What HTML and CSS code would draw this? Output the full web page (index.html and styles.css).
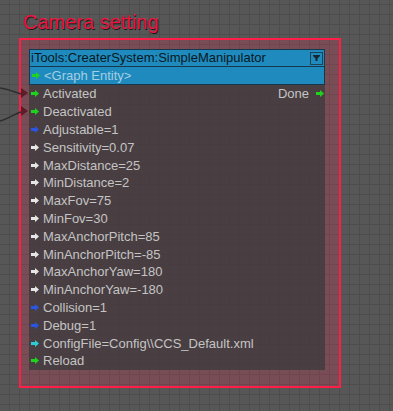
FILE: index.html
```html
<!DOCTYPE html>
<html>
<head>
<meta charset="utf-8">
<link rel="stylesheet" href="styles.css">
</head>
<body>
<div class="canvas">
  <svg class="wires" width="30" height="140" viewBox="0 0 30 140">
    <path d="M0 88 C8 89 14 92 21 94" />
    <path d="M0 121 C8 119 14 114 21 112" />
  </svg>
  <h1 class="title">Camera setting</h1>
  <div class="frame">
    <div class="node">
      <div class="head">
        <span class="head-name">iTools:CreaterSystem:SimpleManipulator</span>
        <span class="drop"><svg width="7" height="6" viewBox="0 0 7 6"><path d="M0 0h7v1L4.5 3.5V6h-2V3.5L0 1z"/></svg></span>
      </div>
      <div class="entity"><svg class="arr green" viewBox="0 0 8 7"><path d="M0 2h4V0l4 3.5L4 7V5H0z"/></svg><span>&lt;Graph Entity&gt;</span></div>
      <div class="rows">
        <div class="row"><i class="pin"></i><svg class="arr green" viewBox="0 0 8 7"><path d="M0 2h4V0l4 3.5L4 7V5H0z"/></svg><span>Activated</span><span class="out">Done<svg class="arr green" viewBox="0 0 8 7"><path d="M0 2h4V0l4 3.5L4 7V5H0z"/></svg></span></div>
        <div class="row"><i class="pin"></i><svg class="arr green" viewBox="0 0 8 7"><path d="M0 2h4V0l4 3.5L4 7V5H0z"/></svg><span>Deactivated</span></div>
        <div class="row"><svg class="arr blue" viewBox="0 0 8 7"><path d="M0 2h4V0l4 3.5L4 7V5H0z"/></svg><span>Adjustable=1</span></div>
        <div class="row"><svg class="arr white" viewBox="0 0 8 7"><path d="M0 2h4V0l4 3.5L4 7V5H0z"/></svg><span>Sensitivity=0.07</span></div>
        <div class="row"><svg class="arr white" viewBox="0 0 8 7"><path d="M0 2h4V0l4 3.5L4 7V5H0z"/></svg><span>MaxDistance=25</span></div>
        <div class="row"><svg class="arr white" viewBox="0 0 8 7"><path d="M0 2h4V0l4 3.5L4 7V5H0z"/></svg><span>MinDistance=2</span></div>
        <div class="row"><svg class="arr white" viewBox="0 0 8 7"><path d="M0 2h4V0l4 3.5L4 7V5H0z"/></svg><span>MaxFov=75</span></div>
        <div class="row"><svg class="arr white" viewBox="0 0 8 7"><path d="M0 2h4V0l4 3.5L4 7V5H0z"/></svg><span>MinFov=30</span></div>
        <div class="row"><svg class="arr white" viewBox="0 0 8 7"><path d="M0 2h4V0l4 3.5L4 7V5H0z"/></svg><span>MaxAnchorPitch=85</span></div>
        <div class="row"><svg class="arr white" viewBox="0 0 8 7"><path d="M0 2h4V0l4 3.5L4 7V5H0z"/></svg><span>MinAnchorPitch=-85</span></div>
        <div class="row"><svg class="arr white" viewBox="0 0 8 7"><path d="M0 2h4V0l4 3.5L4 7V5H0z"/></svg><span>MaxAnchorYaw=180</span></div>
        <div class="row"><svg class="arr white" viewBox="0 0 8 7"><path d="M0 2h4V0l4 3.5L4 7V5H0z"/></svg><span>MinAnchorYaw=-180</span></div>
        <div class="row"><svg class="arr blue" viewBox="0 0 8 7"><path d="M0 2h4V0l4 3.5L4 7V5H0z"/></svg><span>Collision=1</span></div>
        <div class="row"><svg class="arr blue" viewBox="0 0 8 7"><path d="M0 2h4V0l4 3.5L4 7V5H0z"/></svg><span>Debug=1</span></div>
        <div class="row"><svg class="arr cyan" viewBox="0 0 8 7"><path d="M0 2h4V0l4 3.5L4 7V5H0z"/></svg><span>ConfigFile=Config\\CCS_Default.xml</span></div>
        <div class="row"><svg class="arr green" viewBox="0 0 8 7"><path d="M0 2h4V0l4 3.5L4 7V5H0z"/></svg><span>Reload</span></div>
      </div>
    </div>
  </div>
</div>
</body>
</html>
```
FILE: styles.css
```css
html, body {
  margin: 0;
  padding: 0;
}
body {
  width: 393px;
  height: 411px;
  overflow: hidden;
  background-color: #575757;
  background-image:
    linear-gradient(to right, #4d4d4d 1px, transparent 1px),
    linear-gradient(to bottom, #4d4d4d 1px, transparent 1px);
  background-size: 10px 10px;
  background-position: 9px 4px;
  font-family: "Liberation Sans", Arial, sans-serif;
}
.canvas {
  position: relative;
  padding: 11px 0 0 0;
}
.wires {
  position: absolute;
  left: 0;
  top: 0;
}
.wires path {
  fill: none;
  stroke: #2e2e2e;
  stroke-width: 1.4;
}
.title {
  margin: 0 0 4px 23px;
  font-size: 20px;
  font-weight: normal;
  line-height: 23px;
  color: #ee1440;
  text-shadow: 1px 1px 0 #1a1a1a;
}
.frame {
  margin-left: 19px;
  width: 318px;
  height: 346px;
  border: 2px solid #ff1e48;
  background: rgba(255, 40, 80, 0.2);
  padding: 9px 0 0 8px;
  box-sizing: content-box;
  width: 310px;
  height: 337px;
}
.node {
  width: 296px;
  height: 321px;
  background: rgba(62, 60, 62, 0.82);
  display: flex;
  flex-direction: column;
  font-size: 13px;
  color: #c4c4c4;
}
.head {
  height: 16px;
  border: 1px solid #17384c;
  background: #1e8abd;
  display: flex;
  align-items: center;
  justify-content: space-between;
  padding: 0 1px 0 1px;
  color: #0b1822;
}
.head-name {
  line-height: 16px;
}
.drop {
  width: 11px;
  height: 11px;
  border: 1px solid #1d4356;
  display: flex;
  align-items: center;
  justify-content: center;
}
.drop svg {
  fill: #172733;
}
.entity {
  height: 17px;
  border: 1px solid #17384c;
  border-top: none;
  background: #1e8abd;
  display: flex;
  align-items: center;
  padding-left: 1px;
  color: #a6cfe2;
}
.rows {
  display: flex;
  flex-direction: column;
}
.row {
  position: relative;
  height: 17.8px;
  display: flex;
  align-items: center;
  padding-left: 2px;
}
.arr {
  width: 8px;
  height: 7px;
  margin-right: 4px;
  flex: none;
}
.entity .arr {
  margin-left: 1px;
}
.green { fill: #1ed21e; }
.blue { fill: #2a55e0; }
.white { fill: #e6e6e6; }
.cyan { fill: #2ccbd6; }
.out {
  margin-left: auto;
  display: flex;
  align-items: center;
  gap: 7px;
  padding-right: 1px;
}
.out .arr {
  margin-right: 0;
}
.pin {
  position: absolute;
  left: -8px;
  top: 3px;
  width: 0;
  height: 0;
  border-top: 5px solid transparent;
  border-bottom: 5px solid transparent;
  border-left: 7px solid #5c1c28;
}
```
